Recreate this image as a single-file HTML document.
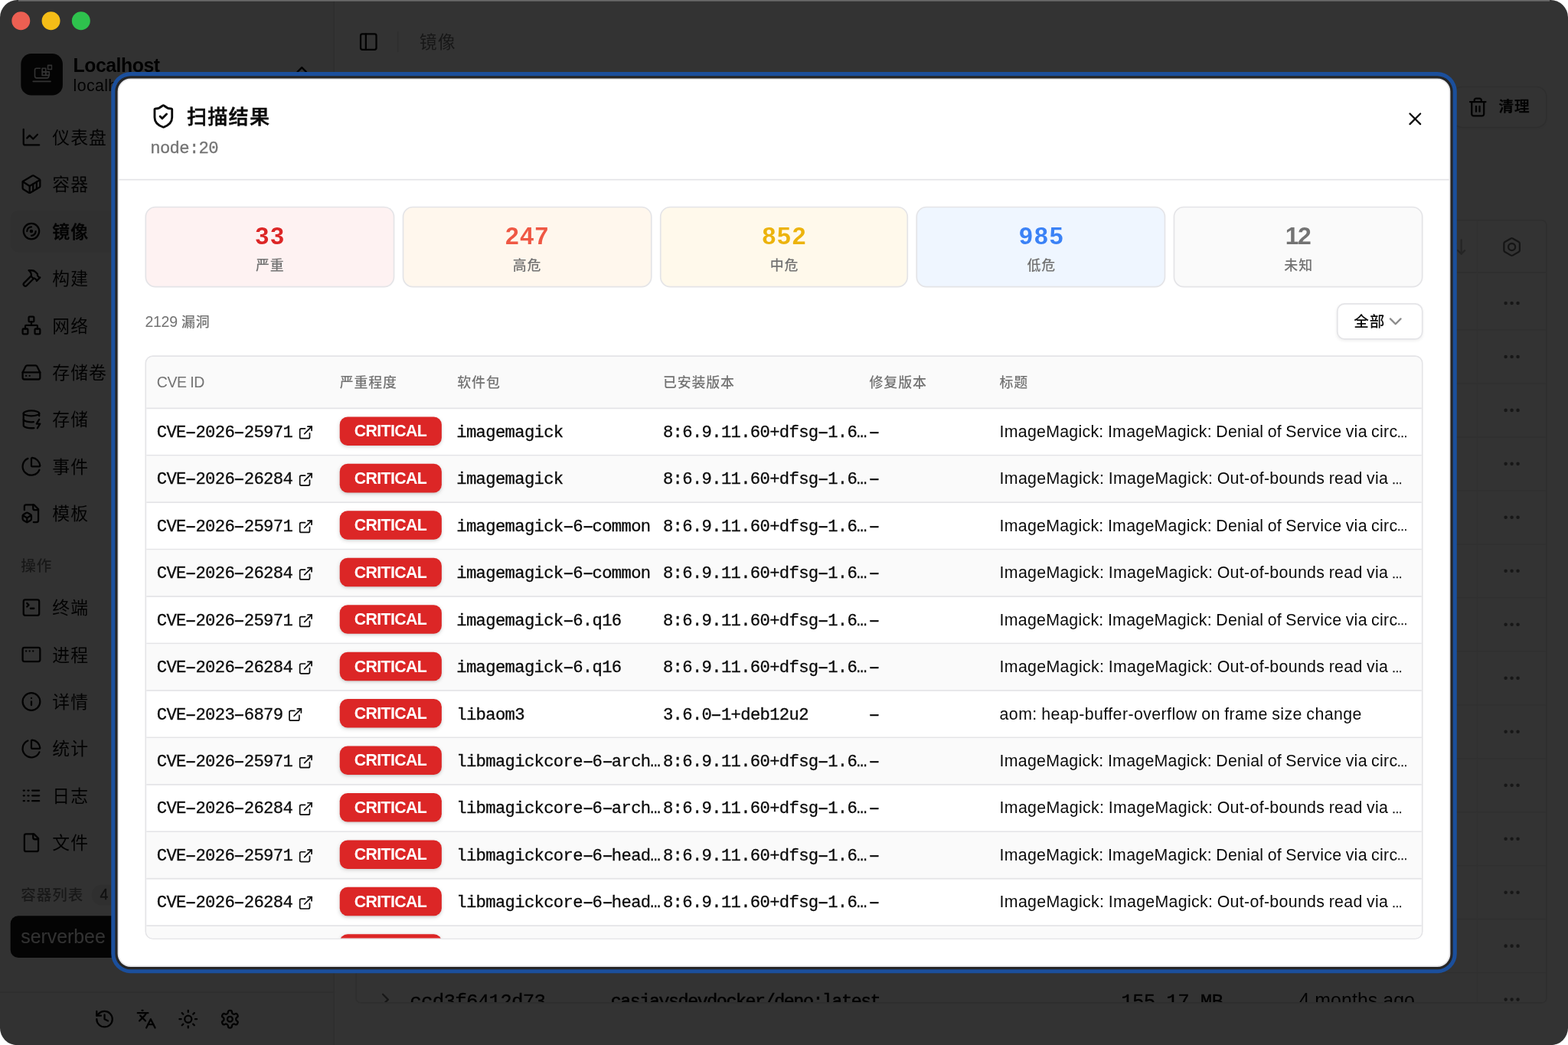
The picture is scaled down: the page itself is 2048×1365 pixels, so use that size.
<!DOCTYPE html>
<html lang="zh-CN">
<head>
<meta charset="utf-8">
<title>扫描结果 - node:20</title>
<style>
*{box-sizing:border-box;margin:0;padding:0}
html,body{width:2048px;height:1365px;overflow:hidden;background:#fff}
body{font-family:"Liberation Sans","Noto Sans CJK SC",sans-serif;font-size:14px;color:#0a0a0a}
svg{display:block;flex:none}
h2,p{font-size:inherit;font-weight:inherit}
.mono{font-family:"Liberation Mono","Noto Sans CJK SC",monospace;-webkit-text-stroke:0.18px currentColor}
.hy{display:inline-block;transform:scaleX(1.75)}
#win{will-change:transform;position:absolute;left:0;top:0;width:1200px;height:800px;transform:scale(1.7066667);transform-origin:0 0;border-radius:13.3px;overflow:hidden;background:#fff}
.abs{position:absolute}
.x{position:absolute;white-space:nowrap}
.sb{position:absolute;left:0;top:0;width:256px;height:800px;background:#fafafa;border-right:1px solid #e5e5e5}
.logo{position:absolute;left:16px;top:41px;width:32px;height:32px;border-radius:8px;background:#171717;display:flex;align-items:center;justify-content:center}
.ni{position:absolute;left:8px;width:240px;height:32px;line-height:32px;border-radius:6px;white-space:nowrap}
.ni svg{position:absolute;left:8px;top:8px}
.ni>span{position:absolute;left:32px;top:0}
.ni.on{background:#f0f0f0}
.gl{position:absolute;left:16px;height:32px;line-height:32px;color:#7a7a7a;white-space:nowrap}
.ft{position:absolute;left:0;top:759px;width:255px;height:41px;border-top:1px solid #e5e5e5}
.ft svg{position:absolute;top:12.3px}
.ov{position:absolute;left:0;top:0;right:0;bottom:0;background:rgba(0,0,0,.8)}
.tl{position:absolute;top:8.8px;width:14px;height:14px;border-radius:50%}
.dlg{position:absolute;left:90px;top:60px;width:1020px;height:680px;background:#fff;border:1px solid #e4e4e7;border-radius:10px;box-shadow:0 0 0 1.9px #262626,0 0 0 4.9px #1b4f9c}
.dh{position:absolute;left:0;top:0;right:0;height:77px;border-bottom:1px solid #e4e4e7}
.card{position:absolute;top:97px;height:62px;border:1px solid #e4e4e7;border-radius:8px;text-align:center}
.card .n{position:absolute;left:0;right:0;top:8px;height:28px;line-height:28px;white-space:nowrap}
.card .l{position:absolute;left:0;right:0;top:36px;height:16px;line-height:16px;color:#737373;white-space:nowrap}
.sel{position:absolute;left:932.1px;top:171.2px;width:66.2px;height:27.6px;border:1px solid #e4e4e7;border-radius:6px;box-shadow:0 1px 2px rgba(0,0,0,.05);background:#fff}
.tb{position:absolute;left:20px;top:211px;width:978px;height:447px;border:1px solid #e4e4e7;border-radius:6px;overflow:hidden;background:#fff}
.th{position:absolute;left:0;top:0;width:976px;height:40px;background:#fafafa;border-bottom:1px solid #e4e4e7;color:#737373}
.th span.h{position:absolute;top:0;height:39px;line-height:39px;white-space:nowrap}
.tr{position:absolute;left:0;width:976px;height:36px;border-bottom:1px solid #e4e4e7;white-space:nowrap}
.tr.alt{background:#fafafa}
.tr>div{position:absolute;top:0;height:35px;line-height:35px}
.tr svg{position:absolute;top:11.9px}
.tr>.bd{left:148px;top:6.25px;height:21.8px;width:78px;border-radius:6px;background:#dc2626;color:#fff;line-height:22px;text-align:center;box-shadow:0 1px 3px rgba(0,0,0,.12),0 1px 2px -1px rgba(0,0,0,.12)}
.c1{left:8px} .c3{left:237.4px} .c4{left:395.4px} .c5{left:553.4px} .c6{left:653px}
</style>
</head>
<body>
<div id="win">
<aside class="sb">
<div class="logo"><svg width="16" height="16" viewBox="0 0 24 24" fill="none" stroke="currentColor" stroke-width="1.4" stroke-linecap="round" stroke-linejoin="round" style="color:#ffffff;"><path d="M10 5H6a2 2 0 0 0-2 2v7a2 2 0 0 0 2 2h12a2 2 0 0 0 2-2v-1"/><path d="M2 20h20"/><rect x="12.500" y="5" width="4" height="4"/><rect x="12.500" y="9" width="4" height="4"/><rect x="16.500" y="9" width="4" height="4"/><rect x="19" y="1.500" width="4.500" height="4.500"/></svg></div>
<div class="x" style="left:56px;top:40px;height:18px;line-height:18px"><span style="display:inline-block;vertical-align:top;line-height:inherit;white-space:pre;font-size:14.56px;font-weight:700;letter-spacing:-0.281px;transform:translateY(0.95px);">Localhost</span></div>
<div class="x" style="left:56px;top:57px;height:16px;line-height:16px"><span style="display:inline-block;vertical-align:top;line-height:inherit;white-space:pre;font-size:12.48px;font-weight:400;letter-spacing:0.229px;transform:translateY(0.69px);">localhost</span></div>
<div class="abs" style="left:223px;top:49px"><svg width="16" height="16" viewBox="0 0 24 24" fill="none" stroke="currentColor" stroke-width="2" stroke-linecap="round" stroke-linejoin="round" style=""><path d="m7 15 5 5 5-5"/><path d="m7 9 5-5 5 5"/></svg></div>
<a class="ni" style="top:89px"><svg width="16" height="16" viewBox="0 0 24 24" fill="none" stroke="currentColor" stroke-width="2" stroke-linecap="round" stroke-linejoin="round" style=""><path d="M3 3v16a2 2 0 0 0 2 2h16"/><path d="m19 9-5 5-4-4-3 3"/></svg><span style="display:inline-block;vertical-align:top;line-height:inherit;white-space:pre;font-size:13.37px;font-weight:400;letter-spacing:0.63px;transform:translateY(1.01px);">仪表盘</span></a>
<a class="ni" style="top:125px"><svg width="16" height="16" viewBox="0 0 24 24" fill="none" stroke="currentColor" stroke-width="2" stroke-linecap="round" stroke-linejoin="round" style=""><path d="M22 7.700c0-.600-.400-1.200-.800-1.500l-6.300-3.900a1.720 1.720 0 0 0-1.700 0l-10.300 6c-.500.200-.900.800-.900 1.400v6.600c0 .500.400 1.200.800 1.500l6.300 3.900a1.720 1.720 0 0 0 1.700 0l10.300-6c.500-.300.900-1 .900-1.500Z"/><path d="M10 21.900V14L2.100 9.100"/><path d="m10 14 11.900-6.900"/><path d="M14 19.800v-8.100"/><path d="M18 17.500V9.400"/></svg><span style="display:inline-block;vertical-align:top;line-height:inherit;white-space:pre;font-size:13.37px;font-weight:400;letter-spacing:0.63px;transform:translateY(1.01px);">容器</span></a>
<a class="ni on" style="top:161px"><svg width="16" height="16" viewBox="0 0 24 24" fill="none" stroke="currentColor" stroke-width="2" stroke-linecap="round" stroke-linejoin="round" style=""><circle cx="12" cy="12" r="9"/><circle cx="12" cy="12" r="1"/><path d="M7 12a5 5 0 0 1 5-5"/><path d="M12 17a5 5 0 0 0 5-5"/></svg><span style="display:inline-block;vertical-align:top;line-height:inherit;white-space:pre;font-size:13.37px;font-weight:500;letter-spacing:0.63px;transform:translateY(1.01px);-webkit-text-stroke:0.25px #0a0a0a;">镜像</span></a>
<a class="ni" style="top:197px"><svg width="16" height="16" viewBox="0 0 24 24" fill="none" stroke="currentColor" stroke-width="2" stroke-linecap="round" stroke-linejoin="round" style=""><path d="m15 12-8.373 8.373a1 1 0 1 1-3-3L12 9"/><path d="m18 15 4-4"/><path d="m21.500 11.500-1.914-1.914A2 2 0 0 1 19 8.172V7l-2.260-2.260a6 6 0 0 0-4.202-1.756L9 2.960l.920.820A6.180 6.180 0 0 1 12 8.400V10l2 2h1.172a2 2 0 0 1 1.414.586L18.500 14.500"/></svg><span style="display:inline-block;vertical-align:top;line-height:inherit;white-space:pre;font-size:13.37px;font-weight:400;letter-spacing:0.63px;transform:translateY(1.01px);">构建</span></a>
<a class="ni" style="top:233px"><svg width="16" height="16" viewBox="0 0 24 24" fill="none" stroke="currentColor" stroke-width="2" stroke-linecap="round" stroke-linejoin="round" style=""><rect x="16" y="16" width="6" height="6" rx="1"/><rect x="2" y="16" width="6" height="6" rx="1"/><rect x="9" y="2" width="6" height="6" rx="1"/><path d="M5 16v-3a1 1 0 0 1 1-1h12a1 1 0 0 1 1 1v3"/><path d="M12 12V8"/></svg><span style="display:inline-block;vertical-align:top;line-height:inherit;white-space:pre;font-size:13.37px;font-weight:400;letter-spacing:0.63px;transform:translateY(1.01px);">网络</span></a>
<a class="ni" style="top:269px"><svg width="16" height="16" viewBox="0 0 24 24" fill="none" stroke="currentColor" stroke-width="2" stroke-linecap="round" stroke-linejoin="round" style=""><path d="M22 12H2"/><path d="M5.450 5.110 2 12v6a2 2 0 0 0 2 2h16a2 2 0 0 0 2-2v-6l-3.450-6.890A2 2 0 0 0 16.760 4H7.240a2 2 0 0 0-1.790 1.110z"/><path d="M6 16h.01"/><path d="M10 16h.01"/></svg><span style="display:inline-block;vertical-align:top;line-height:inherit;white-space:pre;font-size:13.37px;font-weight:400;letter-spacing:0.63px;transform:translateY(1.01px);">存储卷</span></a>
<a class="ni" style="top:305px"><svg width="16" height="16" viewBox="0 0 24 24" fill="none" stroke="currentColor" stroke-width="2" stroke-linecap="round" stroke-linejoin="round" style=""><ellipse cx="12" cy="5" rx="9" ry="3"/><path d="M3 5V19A9 3 0 0 0 15 21.840"/><path d="M21 5V8"/><path d="M21 12L18 17H22L19 22"/><path d="M3 12A9 3 0 0 0 14.590 14.870"/></svg><span style="display:inline-block;vertical-align:top;line-height:inherit;white-space:pre;font-size:13.37px;font-weight:400;letter-spacing:0.63px;transform:translateY(1.01px);">存储</span></a>
<a class="ni" style="top:341px"><svg width="16" height="16" viewBox="0 0 24 24" fill="none" stroke="currentColor" stroke-width="2" stroke-linecap="round" stroke-linejoin="round" style=""><path d="M21 12c.552 0 1.005-.449.950-.998a10 10 0 0 0-8.953-8.951c-.550-.055-.998.398-.998.950v8a1 1 0 0 0 1 1z"/><path d="M21.210 15.890A10 10 0 1 1 8 2.830"/></svg><span style="display:inline-block;vertical-align:top;line-height:inherit;white-space:pre;font-size:13.37px;font-weight:400;letter-spacing:0.63px;transform:translateY(1.01px);">事件</span></a>
<a class="ni" style="top:377px"><svg width="16" height="16" viewBox="0 0 24 24" fill="none" stroke="currentColor" stroke-width="2" stroke-linecap="round" stroke-linejoin="round" style=""><path d="M14.500 22H18a2 2 0 0 0 2-2V7l-5-5H6a2 2 0 0 0-2 2v4"/><path d="M14 2v4a2 2 0 0 0 2 2h4"/><path d="M3 13.100a2 2 0 0 0-1 1.760v3.240a2 2 0 0 0 .970 1.780L6 21.700a2 2 0 0 0 2.030.010L11 19.900a2 2 0 0 0 1-1.760V14.900a2 2 0 0 0-.970-1.780L8 11.300a2 2 0 0 0-2.030-.010Z"/><path d="M7 17v5"/><path d="M11.700 14.200 7 17l-4.700-2.800"/></svg><span style="display:inline-block;vertical-align:top;line-height:inherit;white-space:pre;font-size:13.37px;font-weight:400;letter-spacing:0.63px;transform:translateY(1.01px);">模板</span></a>
<div class="gl" style="top:416px"><span style="display:inline-block;vertical-align:top;line-height:inherit;white-space:pre;font-size:11.46px;font-weight:500;letter-spacing:0.54px;transform:translateY(1.17px);">操作</span></div>
<a class="ni" style="top:449px"><svg width="16" height="16" viewBox="0 0 24 24" fill="none" stroke="currentColor" stroke-width="2" stroke-linecap="round" stroke-linejoin="round" style=""><path d="m7 11 2-2-2-2"/><path d="M11 13h4"/><rect width="18" height="18" x="3" y="3" rx="2" ry="2"/></svg><span style="display:inline-block;vertical-align:top;line-height:inherit;white-space:pre;font-size:13.37px;font-weight:400;letter-spacing:0.63px;transform:translateY(1.01px);">终端</span></a>
<a class="ni" style="top:485px"><svg width="16" height="16" viewBox="0 0 24 24" fill="none" stroke="currentColor" stroke-width="2" stroke-linecap="round" stroke-linejoin="round" style=""><rect width="20" height="16" x="2" y="4" rx="2"/><path d="M6 8h.01"/><path d="M10 8h.01"/><path d="M14 8h.01"/></svg><span style="display:inline-block;vertical-align:top;line-height:inherit;white-space:pre;font-size:13.37px;font-weight:400;letter-spacing:0.63px;transform:translateY(1.01px);">进程</span></a>
<a class="ni" style="top:521px"><svg width="16" height="16" viewBox="0 0 24 24" fill="none" stroke="currentColor" stroke-width="2" stroke-linecap="round" stroke-linejoin="round" style=""><circle cx="12" cy="12" r="10"/><path d="M12 16v-4"/><path d="M12 8h.01"/></svg><span style="display:inline-block;vertical-align:top;line-height:inherit;white-space:pre;font-size:13.37px;font-weight:400;letter-spacing:0.63px;transform:translateY(1.01px);">详情</span></a>
<a class="ni" style="top:557px"><svg width="16" height="16" viewBox="0 0 24 24" fill="none" stroke="currentColor" stroke-width="2" stroke-linecap="round" stroke-linejoin="round" style=""><path d="M21 12c.552 0 1.005-.449.950-.998a10 10 0 0 0-8.953-8.951c-.550-.055-.998.398-.998.950v8a1 1 0 0 0 1 1z"/><path d="M21.210 15.890A10 10 0 1 1 8 2.830"/></svg><span style="display:inline-block;vertical-align:top;line-height:inherit;white-space:pre;font-size:13.37px;font-weight:400;letter-spacing:0.63px;transform:translateY(1.01px);">统计</span></a>
<a class="ni" style="top:593px"><svg width="16" height="16" viewBox="0 0 24 24" fill="none" stroke="currentColor" stroke-width="2" stroke-linecap="round" stroke-linejoin="round" style=""><path d="M13 12h8"/><path d="M13 18h8"/><path d="M13 6h8"/><path d="M3 12h1"/><path d="M3 18h1"/><path d="M3 6h1"/><path d="M8 12h1"/><path d="M8 18h1"/><path d="M8 6h1"/></svg><span style="display:inline-block;vertical-align:top;line-height:inherit;white-space:pre;font-size:13.37px;font-weight:400;letter-spacing:0.63px;transform:translateY(1.01px);">日志</span></a>
<a class="ni" style="top:629px"><svg width="16" height="16" viewBox="0 0 24 24" fill="none" stroke="currentColor" stroke-width="2" stroke-linecap="round" stroke-linejoin="round" style=""><path d="M15 2H6a2 2 0 0 0-2 2v16a2 2 0 0 0 2 2h12a2 2 0 0 0 2-2V7Z"/><path d="M14 2v4a2 2 0 0 0 2 2h4"/></svg><span style="display:inline-block;vertical-align:top;line-height:inherit;white-space:pre;font-size:13.37px;font-weight:400;letter-spacing:0.63px;transform:translateY(1.01px);">文件</span></a>
<div class="gl" style="top:669px"><span style="display:inline-block;vertical-align:top;line-height:inherit;white-space:pre;font-size:11.46px;font-weight:500;letter-spacing:0.54px;">容器列表</span></div>
<div class="x" style="left:69.7px;top:676.9px;width:20px;height:16px;line-height:16px;border-radius:8px;background:#ebebeb;text-align:center;color:#525252"><span style="display:inline-block;vertical-align:top;line-height:inherit;white-space:pre;font-size:11.44px;font-weight:400;letter-spacing:0.844px;transform:translateY(-0.47px);margin-right:-0.844px;-webkit-text-stroke:0.25px currentColor;">4</span></div>
<a class="ni" style="top:701px;background:#171717;color:#fafafa"><span style="left:8px"><span style="display:inline-block;vertical-align:top;line-height:inherit;white-space:pre;font-size:14.56px;font-weight:400;letter-spacing:0.001px;transform:translateY(-0.1px);">serverbee</span></span></a>
<div class="ft">
<svg width="16" height="16" viewBox="0 0 24 24" fill="none" stroke="currentColor" stroke-width="2" stroke-linecap="round" stroke-linejoin="round" style="left:71.8px"><path d="M3 12a9 9 0 1 0 9-9 9.750 9.750 0 0 0-6.740 2.740L3 8"/><path d="M3 3v5h5"/><path d="M12 7v5l4 2"/></svg>
<svg width="16" height="16" viewBox="0 0 24 24" fill="none" stroke="currentColor" stroke-width="2" stroke-linecap="round" stroke-linejoin="round" style="left:104px"><path d="m5 8 6 6"/><path d="m4 14 6-6 2-3"/><path d="M2 5h12"/><path d="M7 2h1"/><path d="m22 22-5-10-5 10"/><path d="M14 18h6"/></svg>
<svg width="16" height="16" viewBox="0 0 24 24" fill="none" stroke="currentColor" stroke-width="2" stroke-linecap="round" stroke-linejoin="round" style="left:136px"><circle cx="12" cy="12" r="4"/><path d="M12 2v2"/><path d="M12 20v2"/><path d="m4.930 4.930 1.410 1.410"/><path d="m17.660 17.660 1.410 1.410"/><path d="M2 12h2"/><path d="M20 12h2"/><path d="m6.340 17.660-1.410 1.410"/><path d="m19.070 4.930-1.410 1.410"/></svg>
<svg width="16" height="16" viewBox="0 0 24 24" fill="none" stroke="currentColor" stroke-width="2" stroke-linecap="round" stroke-linejoin="round" style="left:167.8px"><path d="M12.220 2h-.440a2 2 0 0 0-2 2v.180a2 2 0 0 1-1 1.730l-.430.250a2 2 0 0 1-2 0l-.150-.080a2 2 0 0 0-2.730.730l-.220.380a2 2 0 0 0 .730 2.730l.150.100a2 2 0 0 1 1 1.720v.510a2 2 0 0 1-1 1.740l-.150.090a2 2 0 0 0-.730 2.730l.220.380a2 2 0 0 0 2.730.730l.150-.080a2 2 0 0 1 2 0l.430.250a2 2 0 0 1 1 1.730V20a2 2 0 0 0 2 2h.440a2 2 0 0 0 2-2v-.180a2 2 0 0 1 1-1.730l.430-.250a2 2 0 0 1 2 0l.150.080a2 2 0 0 0 2.730-.730l.220-.390a2 2 0 0 0-.730-2.730l-.150-.080a2 2 0 0 1-1-1.740v-.500a2 2 0 0 1 1-1.740l.150-.090a2 2 0 0 0 .730-2.730l-.220-.380a2 2 0 0 0-2.730-.730l-.150.080a2 2 0 0 1-2 0l-.430-.250a2 2 0 0 1-1-1.730V4a2 2 0 0 0-2-2z"/><circle cx="12" cy="12" r="3"/></svg>
</div>
</aside>
<main class="abs" style="left:256px;top:0;width:944px;height:800px">
<div class="abs" style="left:18px;top:24px"><svg width="16" height="16" viewBox="0 0 24 24" fill="none" stroke="currentColor" stroke-width="2" stroke-linecap="round" stroke-linejoin="round" style=""><rect width="18" height="18" x="3" y="3" rx="2"/><path d="M9 3v18"/></svg></div>
<div class="abs" style="left:48px;top:24px;width:1px;height:16px;background:#e5e5e5"></div>
<div class="x" style="left:65px;top:22px;height:20px;line-height:20px;color:#737373"><span style="display:inline-block;vertical-align:top;line-height:inherit;white-space:pre;font-size:13.37px;font-weight:400;letter-spacing:0.63px;transform:translateY(1.1px);">镜像</span></div>
<div class="abs" style="left:855px;top:66px;width:73px;height:32px;border:1px solid #e5e5e5;border-radius:8px;box-shadow:0 1px 2px rgba(0,0,0,.05)"><span class="abs" style="left:11px;top:7px"><svg width="16" height="16" viewBox="0 0 24 24" fill="none" stroke="currentColor" stroke-width="2" stroke-linecap="round" stroke-linejoin="round" style=""><path d="M3 6h18"/><path d="M19 6v14c0 1-1 2-2 2H7c-1 0-2-1-2-2V6"/><path d="M8 6V4c0-1 1-2 2-2h4c1 0 2 1 2 2v2"/><path d="M10 11v6"/><path d="M14 11v6"/></svg></span><span class="x" style="left:35px;top:0;height:30px;line-height:30px"><span style="display:inline-block;vertical-align:top;line-height:inherit;white-space:pre;font-size:11.46px;font-weight:500;letter-spacing:0.54px;transform:translateY(-0.4px);-webkit-text-stroke:0.25px #0a0a0a;">清理</span></span></div>
<div class="abs" style="left:16px;top:167.9px;width:912px;height:600.4px;border:1px solid #e5e5e5;border-radius:4px;overflow:hidden">
<div class="abs" style="left:0;top:0;width:910px;height:39.8px;border-bottom:1px solid #e5e5e5"></div>
<div class="abs" style="left:857.4px;top:0;width:1px;height:600px;background:#f0f0f0"></div>
<div class="abs" style="left:833.9px;top:11.7px"><svg width="16" height="16" viewBox="0 0 24 24" fill="none" stroke="currentColor" stroke-width="2" stroke-linecap="round" stroke-linejoin="round" style="color:#b9b9b9;"><path d="m21 16-4 4-4-4"/><path d="M17 20V4"/><path d="m3 8 4-4 4 4"/><path d="M7 4v16"/></svg></div>
<div class="abs" style="left:876.3px;top:11.7px"><svg width="16" height="16" viewBox="0 0 24 24" fill="none" stroke="currentColor" stroke-width="2" stroke-linecap="round" stroke-linejoin="round" style="color:#6b6b6b;"><path d="M21 16V8a2 2 0 0 0-1-1.730l-7-4a2 2 0 0 0-2 0l-7 4A2 2 0 0 0 3 8v8a2 2 0 0 0 1 1.730l7 4a2 2 0 0 0 2 0l7-4A2 2 0 0 0 21 16z"/><circle cx="12" cy="12" r="4"/></svg></div>
<div class="abs" style="left:0;top:83.1px;width:910px;height:1px;background:#ededed"></div>
<div class="abs" style="left:876.3px;top:54.8px"><svg width="16" height="16" viewBox="0 0 24 24" fill="none" stroke="currentColor" stroke-width="2" stroke-linecap="round" stroke-linejoin="round" style="color:#737373;"><circle cx="12" cy="12" r="1"/><circle cx="19" cy="12" r="1"/><circle cx="5" cy="12" r="1"/></svg></div>
<div class="abs" style="left:0;top:124.1px;width:910px;height:1px;background:#ededed"></div>
<div class="abs" style="left:876.3px;top:95.8px"><svg width="16" height="16" viewBox="0 0 24 24" fill="none" stroke="currentColor" stroke-width="2" stroke-linecap="round" stroke-linejoin="round" style="color:#737373;"><circle cx="12" cy="12" r="1"/><circle cx="19" cy="12" r="1"/><circle cx="5" cy="12" r="1"/></svg></div>
<div class="abs" style="left:0;top:165.1px;width:910px;height:1px;background:#ededed"></div>
<div class="abs" style="left:876.3px;top:136.8px"><svg width="16" height="16" viewBox="0 0 24 24" fill="none" stroke="currentColor" stroke-width="2" stroke-linecap="round" stroke-linejoin="round" style="color:#737373;"><circle cx="12" cy="12" r="1"/><circle cx="19" cy="12" r="1"/><circle cx="5" cy="12" r="1"/></svg></div>
<div class="abs" style="left:0;top:206.1px;width:910px;height:1px;background:#ededed"></div>
<div class="abs" style="left:876.3px;top:177.8px"><svg width="16" height="16" viewBox="0 0 24 24" fill="none" stroke="currentColor" stroke-width="2" stroke-linecap="round" stroke-linejoin="round" style="color:#737373;"><circle cx="12" cy="12" r="1"/><circle cx="19" cy="12" r="1"/><circle cx="5" cy="12" r="1"/></svg></div>
<div class="abs" style="left:0;top:247.1px;width:910px;height:1px;background:#ededed"></div>
<div class="abs" style="left:876.3px;top:218.8px"><svg width="16" height="16" viewBox="0 0 24 24" fill="none" stroke="currentColor" stroke-width="2" stroke-linecap="round" stroke-linejoin="round" style="color:#737373;"><circle cx="12" cy="12" r="1"/><circle cx="19" cy="12" r="1"/><circle cx="5" cy="12" r="1"/></svg></div>
<div class="abs" style="left:0;top:288.1px;width:910px;height:1px;background:#ededed"></div>
<div class="abs" style="left:876.3px;top:259.8px"><svg width="16" height="16" viewBox="0 0 24 24" fill="none" stroke="currentColor" stroke-width="2" stroke-linecap="round" stroke-linejoin="round" style="color:#737373;"><circle cx="12" cy="12" r="1"/><circle cx="19" cy="12" r="1"/><circle cx="5" cy="12" r="1"/></svg></div>
<div class="abs" style="left:0;top:329.1px;width:910px;height:1px;background:#ededed"></div>
<div class="abs" style="left:876.3px;top:300.8px"><svg width="16" height="16" viewBox="0 0 24 24" fill="none" stroke="currentColor" stroke-width="2" stroke-linecap="round" stroke-linejoin="round" style="color:#737373;"><circle cx="12" cy="12" r="1"/><circle cx="19" cy="12" r="1"/><circle cx="5" cy="12" r="1"/></svg></div>
<div class="abs" style="left:0;top:370.1px;width:910px;height:1px;background:#ededed"></div>
<div class="abs" style="left:876.3px;top:341.8px"><svg width="16" height="16" viewBox="0 0 24 24" fill="none" stroke="currentColor" stroke-width="2" stroke-linecap="round" stroke-linejoin="round" style="color:#737373;"><circle cx="12" cy="12" r="1"/><circle cx="19" cy="12" r="1"/><circle cx="5" cy="12" r="1"/></svg></div>
<div class="abs" style="left:0;top:411.1px;width:910px;height:1px;background:#ededed"></div>
<div class="abs" style="left:876.3px;top:382.8px"><svg width="16" height="16" viewBox="0 0 24 24" fill="none" stroke="currentColor" stroke-width="2" stroke-linecap="round" stroke-linejoin="round" style="color:#737373;"><circle cx="12" cy="12" r="1"/><circle cx="19" cy="12" r="1"/><circle cx="5" cy="12" r="1"/></svg></div>
<div class="abs" style="left:0;top:452.1px;width:910px;height:1px;background:#ededed"></div>
<div class="abs" style="left:876.3px;top:423.8px"><svg width="16" height="16" viewBox="0 0 24 24" fill="none" stroke="currentColor" stroke-width="2" stroke-linecap="round" stroke-linejoin="round" style="color:#737373;"><circle cx="12" cy="12" r="1"/><circle cx="19" cy="12" r="1"/><circle cx="5" cy="12" r="1"/></svg></div>
<div class="abs" style="left:0;top:493.1px;width:910px;height:1px;background:#ededed"></div>
<div class="abs" style="left:876.3px;top:464.8px"><svg width="16" height="16" viewBox="0 0 24 24" fill="none" stroke="currentColor" stroke-width="2" stroke-linecap="round" stroke-linejoin="round" style="color:#737373;"><circle cx="12" cy="12" r="1"/><circle cx="19" cy="12" r="1"/><circle cx="5" cy="12" r="1"/></svg></div>
<div class="abs" style="left:0;top:534.1px;width:910px;height:1px;background:#ededed"></div>
<div class="abs" style="left:876.3px;top:505.8px"><svg width="16" height="16" viewBox="0 0 24 24" fill="none" stroke="currentColor" stroke-width="2" stroke-linecap="round" stroke-linejoin="round" style="color:#737373;"><circle cx="12" cy="12" r="1"/><circle cx="19" cy="12" r="1"/><circle cx="5" cy="12" r="1"/></svg></div>
<div class="abs" style="left:0;top:575.1px;width:910px;height:1px;background:#ededed"></div>
<div class="abs" style="left:876.3px;top:546.8px"><svg width="16" height="16" viewBox="0 0 24 24" fill="none" stroke="currentColor" stroke-width="2" stroke-linecap="round" stroke-linejoin="round" style="color:#737373;"><circle cx="12" cy="12" r="1"/><circle cx="19" cy="12" r="1"/><circle cx="5" cy="12" r="1"/></svg></div>
<div class="abs" style="left:0;top:616.1px;width:910px;height:1px;background:#ededed"></div>
<div class="abs" style="left:876.3px;top:587.8px"><svg width="16" height="16" viewBox="0 0 24 24" fill="none" stroke="currentColor" stroke-width="2" stroke-linecap="round" stroke-linejoin="round" style="color:#737373;"><circle cx="12" cy="12" r="1"/><circle cx="19" cy="12" r="1"/><circle cx="5" cy="12" r="1"/></svg></div>
<div class="abs" style="left:14.1px;top:587.8px"><svg width="16" height="16" viewBox="0 0 24 24" fill="none" stroke="currentColor" stroke-width="2" stroke-linecap="round" stroke-linejoin="round" style="color:#737373;"><path d="m9 18 6-6-6-6"/></svg></div>
<div class="x" style="left:40.6px;top:586px;height:20px;line-height:20px"><span class="mono" style="display:inline-block;vertical-align:top;line-height:inherit;white-space:pre;font-size:15.16px;letter-spacing:-0.445px;transform:translateY(2.34px);">ccd3f6412d73</span></div>
<div class="x" style="left:194.4px;top:586px;height:20px;line-height:20px"><span class="mono" style="display:inline-block;vertical-align:top;line-height:inherit;white-space:pre;font-size:13.65px;letter-spacing:-0.825px;transform:translateY(2.62px);-webkit-text-stroke:0.35px currentColor;">casjaysdevdocker/deno:latest</span></div>
<div class="x" style="left:585px;top:586px;height:20px;line-height:20px"><span class="mono" style="display:inline-block;vertical-align:top;line-height:inherit;white-space:pre;font-size:15.16px;letter-spacing:-0.445px;transform:translateY(2.34px);">155.17 MB</span></div>
<div class="x" style="left:721px;top:586px;height:20px;line-height:20px"><span style="display:inline-block;vertical-align:top;line-height:inherit;white-space:pre;font-size:14.56px;font-weight:400;letter-spacing:0.054px;transform:translateY(0.73px);">4 months ago</span></div>
</div>
</main>
<div class="ov"></div>
<div class="abs" style="left:14px;top:0;width:1172px;height:0.6px;background:#6a6a6a"></div>
<div class="tl" style="left:8.8px;background:#ec5f52"></div>
<div class="tl" style="left:32px;background:#f5bd17"></div>
<div class="tl" style="left:55.1px;background:#2ec24d"></div>
<section class="dlg">
<header class="dh">
<div class="abs" style="left:24px;top:18px"><svg width="20" height="20" viewBox="0 0 24 24" fill="none" stroke="currentColor" stroke-width="2" stroke-linecap="round" stroke-linejoin="round" style=""><path d="M20 13c0 5-3.5 7.5-7.660 8.950a1 1 0 0 1-.670-.010C7.500 20.500 4 18 4 13V6a1 1 0 0 1 1-1c2 0 4.500-1.200 6.240-2.720a1.170 1.170 0 0 1 1.520 0C14.510 3.810 17 5 19 5a1 1 0 0 1 1 1z"/><path d="m9 12 2 2 4-4"/></svg></div>
<h2 class="x" style="left:52px;top:16px;height:24px;line-height:24px"><span style="display:inline-block;vertical-align:top;line-height:inherit;white-space:pre;font-size:15.28px;font-weight:500;letter-spacing:0.72px;transform:translateY(0.88px);-webkit-text-stroke:0.3px #0a0a0a;">扫描结果</span></h2>
<p class="x" style="left:24px;top:44px;height:16px;line-height:16px;color:#737373"><span class="mono" style="display:inline-block;vertical-align:top;line-height:inherit;white-space:pre;font-size:13.0px;letter-spacing:-0.385px;transform:translateY(1.23px);">node:20</span></p>
<div class="abs" style="left:984px;top:21.8px"><svg width="16" height="16" viewBox="0 0 24 24" fill="none" stroke="currentColor" stroke-width="2" stroke-linecap="round" stroke-linejoin="round" style=""><path d="M18 6 6 18"/><path d="m6 6 12 12"/></svg></div>
</header>
<div class="card" style="left:20.00px;width:190.80px;background:#fef2f2"><div class="n" style="color:#dc2626"><span style="display:inline-block;vertical-align:top;line-height:inherit;white-space:pre;font-size:18.72px;font-weight:700;letter-spacing:1.219px;transform:translateY(-0.15px);margin-right:-1.219px;">33</span></div><div class="l"><span style="display:inline-block;vertical-align:top;line-height:inherit;white-space:pre;font-size:10.5px;font-weight:500;letter-spacing:0.5px;margin-right:-0.5px;">严重</span></div></div>
<div class="card" style="left:216.80px;width:190.80px;background:#fff7ed"><div class="n" style="color:#ef5844"><span style="display:inline-block;vertical-align:top;line-height:inherit;white-space:pre;font-size:18.72px;font-weight:700;letter-spacing:0.828px;transform:translateY(-0.15px);margin-right:-0.828px;">247</span></div><div class="l"><span style="display:inline-block;vertical-align:top;line-height:inherit;white-space:pre;font-size:10.5px;font-weight:500;letter-spacing:0.5px;margin-right:-0.5px;">高危</span></div></div>
<div class="card" style="left:413.60px;width:190.80px;background:#fff9eb"><div class="n" style="color:#ecb30d"><span style="display:inline-block;vertical-align:top;line-height:inherit;white-space:pre;font-size:18.72px;font-weight:700;letter-spacing:1.115px;transform:translateY(-0.15px);margin-right:-1.115px;">852</span></div><div class="l"><span style="display:inline-block;vertical-align:top;line-height:inherit;white-space:pre;font-size:10.5px;font-weight:500;letter-spacing:0.5px;margin-right:-0.5px;">中危</span></div></div>
<div class="card" style="left:610.40px;width:190.80px;background:#eff6ff"><div class="n" style="color:#3b82f6"><span style="display:inline-block;vertical-align:top;line-height:inherit;white-space:pre;font-size:18.72px;font-weight:700;letter-spacing:1.234px;transform:translateY(-0.15px);margin-right:-1.234px;">985</span></div><div class="l"><span style="display:inline-block;vertical-align:top;line-height:inherit;white-space:pre;font-size:10.5px;font-weight:500;letter-spacing:0.5px;margin-right:-0.5px;">低危</span></div></div>
<div class="card" style="left:807.20px;width:190.80px;background:#fafafa"><div class="n" style="color:#737373"><span style="display:inline-block;vertical-align:top;line-height:inherit;white-space:pre;font-size:18.72px;font-weight:700;letter-spacing:-0.852px;transform:translateY(-0.15px);margin-right:0.852px;">12</span></div><div class="l"><span style="display:inline-block;vertical-align:top;line-height:inherit;white-space:pre;font-size:10.5px;font-weight:500;letter-spacing:0.5px;margin-right:-0.5px;">未知</span></div></div>
<div class="x" style="left:20px;top:176px;height:16px;line-height:16px;color:#737373"><span style="display:inline-block;vertical-align:top;line-height:inherit;white-space:pre;font-size:11.44px;font-weight:400;letter-spacing:-0.163px;transform:translateY(1.03px);">2129 </span><span style="display:inline-block;vertical-align:top;line-height:inherit;white-space:pre;font-size:10.5px;font-weight:500;letter-spacing:0.5px;transform:translateY(1.15px);">漏洞</span></div>
<div class="sel"><span class="x" style="left:12px;top:0;height:26px;line-height:26px"><span style="display:inline-block;vertical-align:top;line-height:inherit;white-space:pre;font-size:11.46px;font-weight:500;letter-spacing:0.54px;">全部</span></span><span class="abs" style="left:35.8px;top:4.8px"><svg width="16" height="16" viewBox="0 0 24 24" fill="none" stroke="currentColor" stroke-width="2" stroke-linecap="round" stroke-linejoin="round" style="color:#8a8a8a;"><path d="m6 9 6 6 6-6"/></svg></span></div>
<div class="tb">
<div class="th">
<span class="h" style="left:8px"><span style="display:inline-block;vertical-align:top;line-height:inherit;white-space:pre;font-size:11.44px;font-weight:400;letter-spacing:-0.294px;transform:translateY(0.66px);">CVE ID</span></span>
<span class="h" style="left:148px"><span style="display:inline-block;vertical-align:top;line-height:inherit;white-space:pre;font-size:10.5px;font-weight:500;letter-spacing:0.5px;transform:translateY(0.73px);">严重程度</span></span>
<span class="h" style="left:238px"><span style="display:inline-block;vertical-align:top;line-height:inherit;white-space:pre;font-size:10.5px;font-weight:500;letter-spacing:0.5px;transform:translateY(0.73px);">软件包</span></span>
<span class="h" style="left:395.4px"><span style="display:inline-block;vertical-align:top;line-height:inherit;white-space:pre;font-size:10.5px;font-weight:500;letter-spacing:0.5px;transform:translateY(0.73px);">已安装版本</span></span>
<span class="h" style="left:553.4px"><span style="display:inline-block;vertical-align:top;line-height:inherit;white-space:pre;font-size:10.5px;font-weight:500;letter-spacing:0.5px;transform:translateY(0.73px);">修复版本</span></span>
<span class="h" style="left:653px"><span style="display:inline-block;vertical-align:top;line-height:inherit;white-space:pre;font-size:10.5px;font-weight:500;letter-spacing:0.5px;transform:translateY(0.73px);">标题</span></span>
</div>
<div class="tr" style="top:40px">
<div class="c1"><span class="mono" style="display:inline-block;vertical-align:top;line-height:inherit;white-space:pre;font-size:13.0px;letter-spacing:-0.385px;transform:translateY(0.54px);">CVE<span class="hy">-</span>2026<span class="hy">-</span>25971</span></div><svg width="12" height="12" viewBox="0 0 24 24" fill="none" stroke="currentColor" stroke-width="2" stroke-linecap="round" stroke-linejoin="round" style="color:#0a0a0a;left:115.8px"><path d="M15 3h6v6"/><path d="M10 14 21 3"/><path d="M18 13v6a2 2 0 0 1-2 2H5a2 2 0 0 1-2-2V8a2 2 0 0 1 2-2h6"/></svg>
<div class="bd"><span style="display:inline-block;vertical-align:top;line-height:inherit;white-space:pre;font-size:12.48px;font-weight:700;letter-spacing:-0.361px;transform:translateY(0.23px);margin-right:0.361px;">CRITICAL</span></div>
<div class="c3"><span class="mono" style="display:inline-block;vertical-align:top;line-height:inherit;white-space:pre;font-size:13.0px;letter-spacing:-0.385px;transform:translateY(0.54px);">imagemagick</span></div>
<div class="c4"><span class="mono" style="display:inline-block;vertical-align:top;line-height:inherit;white-space:pre;font-size:13.0px;letter-spacing:-0.385px;transform:translateY(0.54px);">8:6.9.11.60+dfsg<span class="hy">-</span>1.6…</span></div>
<div class="c5"><span class="mono" style="display:inline-block;vertical-align:top;line-height:inherit;white-space:pre;font-size:13.0px;letter-spacing:-0.385px;transform:translateY(0.54px);"><span class="hy">-</span></span></div>
<div class="c6"><span style="display:inline-block;vertical-align:top;line-height:inherit;white-space:pre;font-size:12.48px;font-weight:400;letter-spacing:0.171px;transform:translateY(0.54px);word-spacing:-0.5px;">ImageMagick: ImageMagick: Denial of Service via circ</span><span style="display:inline-block;vertical-align:top;line-height:inherit;white-space:pre;font-size:8px;-webkit-text-stroke:0.3px #0a0a0a;margin-left:-0.4px;transform:translateY(1.29px)">…</span></div>
</div>
<div class="tr alt" style="top:76px">
<div class="c1"><span class="mono" style="display:inline-block;vertical-align:top;line-height:inherit;white-space:pre;font-size:13.0px;letter-spacing:-0.385px;transform:translateY(0.54px);">CVE<span class="hy">-</span>2026<span class="hy">-</span>26284</span></div><svg width="12" height="12" viewBox="0 0 24 24" fill="none" stroke="currentColor" stroke-width="2" stroke-linecap="round" stroke-linejoin="round" style="color:#0a0a0a;left:115.8px"><path d="M15 3h6v6"/><path d="M10 14 21 3"/><path d="M18 13v6a2 2 0 0 1-2 2H5a2 2 0 0 1-2-2V8a2 2 0 0 1 2-2h6"/></svg>
<div class="bd"><span style="display:inline-block;vertical-align:top;line-height:inherit;white-space:pre;font-size:12.48px;font-weight:700;letter-spacing:-0.361px;transform:translateY(0.23px);margin-right:0.361px;">CRITICAL</span></div>
<div class="c3"><span class="mono" style="display:inline-block;vertical-align:top;line-height:inherit;white-space:pre;font-size:13.0px;letter-spacing:-0.385px;transform:translateY(0.54px);">imagemagick</span></div>
<div class="c4"><span class="mono" style="display:inline-block;vertical-align:top;line-height:inherit;white-space:pre;font-size:13.0px;letter-spacing:-0.385px;transform:translateY(0.54px);">8:6.9.11.60+dfsg<span class="hy">-</span>1.6…</span></div>
<div class="c5"><span class="mono" style="display:inline-block;vertical-align:top;line-height:inherit;white-space:pre;font-size:13.0px;letter-spacing:-0.385px;transform:translateY(0.54px);"><span class="hy">-</span></span></div>
<div class="c6"><span style="display:inline-block;vertical-align:top;line-height:inherit;white-space:pre;font-size:12.48px;font-weight:400;letter-spacing:0.204px;transform:translateY(0.54px);word-spacing:-0.5px;">ImageMagick: ImageMagick: Out-of-bounds read via </span><span style="display:inline-block;vertical-align:top;line-height:inherit;white-space:pre;font-size:8px;-webkit-text-stroke:0.3px #0a0a0a;margin-left:-0.4px;transform:translateY(1.29px)">…</span></div>
</div>
<div class="tr" style="top:112px">
<div class="c1"><span class="mono" style="display:inline-block;vertical-align:top;line-height:inherit;white-space:pre;font-size:13.0px;letter-spacing:-0.385px;transform:translateY(0.54px);">CVE<span class="hy">-</span>2026<span class="hy">-</span>25971</span></div><svg width="12" height="12" viewBox="0 0 24 24" fill="none" stroke="currentColor" stroke-width="2" stroke-linecap="round" stroke-linejoin="round" style="color:#0a0a0a;left:115.8px"><path d="M15 3h6v6"/><path d="M10 14 21 3"/><path d="M18 13v6a2 2 0 0 1-2 2H5a2 2 0 0 1-2-2V8a2 2 0 0 1 2-2h6"/></svg>
<div class="bd"><span style="display:inline-block;vertical-align:top;line-height:inherit;white-space:pre;font-size:12.48px;font-weight:700;letter-spacing:-0.361px;transform:translateY(0.23px);margin-right:0.361px;">CRITICAL</span></div>
<div class="c3"><span class="mono" style="display:inline-block;vertical-align:top;line-height:inherit;white-space:pre;font-size:13.0px;letter-spacing:-0.385px;transform:translateY(0.54px);">imagemagick<span class="hy">-</span>6<span class="hy">-</span>common</span></div>
<div class="c4"><span class="mono" style="display:inline-block;vertical-align:top;line-height:inherit;white-space:pre;font-size:13.0px;letter-spacing:-0.385px;transform:translateY(0.54px);">8:6.9.11.60+dfsg<span class="hy">-</span>1.6…</span></div>
<div class="c5"><span class="mono" style="display:inline-block;vertical-align:top;line-height:inherit;white-space:pre;font-size:13.0px;letter-spacing:-0.385px;transform:translateY(0.54px);"><span class="hy">-</span></span></div>
<div class="c6"><span style="display:inline-block;vertical-align:top;line-height:inherit;white-space:pre;font-size:12.48px;font-weight:400;letter-spacing:0.171px;transform:translateY(0.54px);word-spacing:-0.5px;">ImageMagick: ImageMagick: Denial of Service via circ</span><span style="display:inline-block;vertical-align:top;line-height:inherit;white-space:pre;font-size:8px;-webkit-text-stroke:0.3px #0a0a0a;margin-left:-0.4px;transform:translateY(1.29px)">…</span></div>
</div>
<div class="tr alt" style="top:148px">
<div class="c1"><span class="mono" style="display:inline-block;vertical-align:top;line-height:inherit;white-space:pre;font-size:13.0px;letter-spacing:-0.385px;transform:translateY(0.54px);">CVE<span class="hy">-</span>2026<span class="hy">-</span>26284</span></div><svg width="12" height="12" viewBox="0 0 24 24" fill="none" stroke="currentColor" stroke-width="2" stroke-linecap="round" stroke-linejoin="round" style="color:#0a0a0a;left:115.8px"><path d="M15 3h6v6"/><path d="M10 14 21 3"/><path d="M18 13v6a2 2 0 0 1-2 2H5a2 2 0 0 1-2-2V8a2 2 0 0 1 2-2h6"/></svg>
<div class="bd"><span style="display:inline-block;vertical-align:top;line-height:inherit;white-space:pre;font-size:12.48px;font-weight:700;letter-spacing:-0.361px;transform:translateY(0.23px);margin-right:0.361px;">CRITICAL</span></div>
<div class="c3"><span class="mono" style="display:inline-block;vertical-align:top;line-height:inherit;white-space:pre;font-size:13.0px;letter-spacing:-0.385px;transform:translateY(0.54px);">imagemagick<span class="hy">-</span>6<span class="hy">-</span>common</span></div>
<div class="c4"><span class="mono" style="display:inline-block;vertical-align:top;line-height:inherit;white-space:pre;font-size:13.0px;letter-spacing:-0.385px;transform:translateY(0.54px);">8:6.9.11.60+dfsg<span class="hy">-</span>1.6…</span></div>
<div class="c5"><span class="mono" style="display:inline-block;vertical-align:top;line-height:inherit;white-space:pre;font-size:13.0px;letter-spacing:-0.385px;transform:translateY(0.54px);"><span class="hy">-</span></span></div>
<div class="c6"><span style="display:inline-block;vertical-align:top;line-height:inherit;white-space:pre;font-size:12.48px;font-weight:400;letter-spacing:0.204px;transform:translateY(0.54px);word-spacing:-0.5px;">ImageMagick: ImageMagick: Out-of-bounds read via </span><span style="display:inline-block;vertical-align:top;line-height:inherit;white-space:pre;font-size:8px;-webkit-text-stroke:0.3px #0a0a0a;margin-left:-0.4px;transform:translateY(1.29px)">…</span></div>
</div>
<div class="tr" style="top:184px">
<div class="c1"><span class="mono" style="display:inline-block;vertical-align:top;line-height:inherit;white-space:pre;font-size:13.0px;letter-spacing:-0.385px;transform:translateY(0.54px);">CVE<span class="hy">-</span>2026<span class="hy">-</span>25971</span></div><svg width="12" height="12" viewBox="0 0 24 24" fill="none" stroke="currentColor" stroke-width="2" stroke-linecap="round" stroke-linejoin="round" style="color:#0a0a0a;left:115.8px"><path d="M15 3h6v6"/><path d="M10 14 21 3"/><path d="M18 13v6a2 2 0 0 1-2 2H5a2 2 0 0 1-2-2V8a2 2 0 0 1 2-2h6"/></svg>
<div class="bd"><span style="display:inline-block;vertical-align:top;line-height:inherit;white-space:pre;font-size:12.48px;font-weight:700;letter-spacing:-0.361px;transform:translateY(0.23px);margin-right:0.361px;">CRITICAL</span></div>
<div class="c3"><span class="mono" style="display:inline-block;vertical-align:top;line-height:inherit;white-space:pre;font-size:13.0px;letter-spacing:-0.385px;transform:translateY(0.54px);">imagemagick<span class="hy">-</span>6.q16</span></div>
<div class="c4"><span class="mono" style="display:inline-block;vertical-align:top;line-height:inherit;white-space:pre;font-size:13.0px;letter-spacing:-0.385px;transform:translateY(0.54px);">8:6.9.11.60+dfsg<span class="hy">-</span>1.6…</span></div>
<div class="c5"><span class="mono" style="display:inline-block;vertical-align:top;line-height:inherit;white-space:pre;font-size:13.0px;letter-spacing:-0.385px;transform:translateY(0.54px);"><span class="hy">-</span></span></div>
<div class="c6"><span style="display:inline-block;vertical-align:top;line-height:inherit;white-space:pre;font-size:12.48px;font-weight:400;letter-spacing:0.171px;transform:translateY(0.54px);word-spacing:-0.5px;">ImageMagick: ImageMagick: Denial of Service via circ</span><span style="display:inline-block;vertical-align:top;line-height:inherit;white-space:pre;font-size:8px;-webkit-text-stroke:0.3px #0a0a0a;margin-left:-0.4px;transform:translateY(1.29px)">…</span></div>
</div>
<div class="tr alt" style="top:220px">
<div class="c1"><span class="mono" style="display:inline-block;vertical-align:top;line-height:inherit;white-space:pre;font-size:13.0px;letter-spacing:-0.385px;transform:translateY(0.54px);">CVE<span class="hy">-</span>2026<span class="hy">-</span>26284</span></div><svg width="12" height="12" viewBox="0 0 24 24" fill="none" stroke="currentColor" stroke-width="2" stroke-linecap="round" stroke-linejoin="round" style="color:#0a0a0a;left:115.8px"><path d="M15 3h6v6"/><path d="M10 14 21 3"/><path d="M18 13v6a2 2 0 0 1-2 2H5a2 2 0 0 1-2-2V8a2 2 0 0 1 2-2h6"/></svg>
<div class="bd"><span style="display:inline-block;vertical-align:top;line-height:inherit;white-space:pre;font-size:12.48px;font-weight:700;letter-spacing:-0.361px;transform:translateY(0.23px);margin-right:0.361px;">CRITICAL</span></div>
<div class="c3"><span class="mono" style="display:inline-block;vertical-align:top;line-height:inherit;white-space:pre;font-size:13.0px;letter-spacing:-0.385px;transform:translateY(0.54px);">imagemagick<span class="hy">-</span>6.q16</span></div>
<div class="c4"><span class="mono" style="display:inline-block;vertical-align:top;line-height:inherit;white-space:pre;font-size:13.0px;letter-spacing:-0.385px;transform:translateY(0.54px);">8:6.9.11.60+dfsg<span class="hy">-</span>1.6…</span></div>
<div class="c5"><span class="mono" style="display:inline-block;vertical-align:top;line-height:inherit;white-space:pre;font-size:13.0px;letter-spacing:-0.385px;transform:translateY(0.54px);"><span class="hy">-</span></span></div>
<div class="c6"><span style="display:inline-block;vertical-align:top;line-height:inherit;white-space:pre;font-size:12.48px;font-weight:400;letter-spacing:0.204px;transform:translateY(0.54px);word-spacing:-0.5px;">ImageMagick: ImageMagick: Out-of-bounds read via </span><span style="display:inline-block;vertical-align:top;line-height:inherit;white-space:pre;font-size:8px;-webkit-text-stroke:0.3px #0a0a0a;margin-left:-0.4px;transform:translateY(1.29px)">…</span></div>
</div>
<div class="tr" style="top:256px">
<div class="c1"><span class="mono" style="display:inline-block;vertical-align:top;line-height:inherit;white-space:pre;font-size:13.0px;letter-spacing:-0.385px;transform:translateY(0.54px);">CVE<span class="hy">-</span>2023<span class="hy">-</span>6879</span></div><svg width="12" height="12" viewBox="0 0 24 24" fill="none" stroke="currentColor" stroke-width="2" stroke-linecap="round" stroke-linejoin="round" style="color:#0a0a0a;left:108.4px"><path d="M15 3h6v6"/><path d="M10 14 21 3"/><path d="M18 13v6a2 2 0 0 1-2 2H5a2 2 0 0 1-2-2V8a2 2 0 0 1 2-2h6"/></svg>
<div class="bd"><span style="display:inline-block;vertical-align:top;line-height:inherit;white-space:pre;font-size:12.48px;font-weight:700;letter-spacing:-0.361px;transform:translateY(0.23px);margin-right:0.361px;">CRITICAL</span></div>
<div class="c3"><span class="mono" style="display:inline-block;vertical-align:top;line-height:inherit;white-space:pre;font-size:13.0px;letter-spacing:-0.385px;transform:translateY(0.54px);">libaom3</span></div>
<div class="c4"><span class="mono" style="display:inline-block;vertical-align:top;line-height:inherit;white-space:pre;font-size:13.0px;letter-spacing:-0.385px;transform:translateY(0.54px);">3.6.0<span class="hy">-</span>1+deb12u2</span></div>
<div class="c5"><span class="mono" style="display:inline-block;vertical-align:top;line-height:inherit;white-space:pre;font-size:13.0px;letter-spacing:-0.385px;transform:translateY(0.54px);"><span class="hy">-</span></span></div>
<div class="c6"><span style="display:inline-block;vertical-align:top;line-height:inherit;white-space:pre;font-size:12.48px;font-weight:400;letter-spacing:0.256px;transform:translateY(0.54px);word-spacing:-0.5px;">aom: heap-buffer-overflow on frame size change</span></div>
</div>
<div class="tr alt" style="top:292px">
<div class="c1"><span class="mono" style="display:inline-block;vertical-align:top;line-height:inherit;white-space:pre;font-size:13.0px;letter-spacing:-0.385px;transform:translateY(0.54px);">CVE<span class="hy">-</span>2026<span class="hy">-</span>25971</span></div><svg width="12" height="12" viewBox="0 0 24 24" fill="none" stroke="currentColor" stroke-width="2" stroke-linecap="round" stroke-linejoin="round" style="color:#0a0a0a;left:115.8px"><path d="M15 3h6v6"/><path d="M10 14 21 3"/><path d="M18 13v6a2 2 0 0 1-2 2H5a2 2 0 0 1-2-2V8a2 2 0 0 1 2-2h6"/></svg>
<div class="bd"><span style="display:inline-block;vertical-align:top;line-height:inherit;white-space:pre;font-size:12.48px;font-weight:700;letter-spacing:-0.361px;transform:translateY(0.23px);margin-right:0.361px;">CRITICAL</span></div>
<div class="c3"><span class="mono" style="display:inline-block;vertical-align:top;line-height:inherit;white-space:pre;font-size:13.0px;letter-spacing:-0.385px;transform:translateY(0.54px);">libmagickcore<span class="hy">-</span>6<span class="hy">-</span>arch…</span></div>
<div class="c4"><span class="mono" style="display:inline-block;vertical-align:top;line-height:inherit;white-space:pre;font-size:13.0px;letter-spacing:-0.385px;transform:translateY(0.54px);">8:6.9.11.60+dfsg<span class="hy">-</span>1.6…</span></div>
<div class="c5"><span class="mono" style="display:inline-block;vertical-align:top;line-height:inherit;white-space:pre;font-size:13.0px;letter-spacing:-0.385px;transform:translateY(0.54px);"><span class="hy">-</span></span></div>
<div class="c6"><span style="display:inline-block;vertical-align:top;line-height:inherit;white-space:pre;font-size:12.48px;font-weight:400;letter-spacing:0.171px;transform:translateY(0.54px);word-spacing:-0.5px;">ImageMagick: ImageMagick: Denial of Service via circ</span><span style="display:inline-block;vertical-align:top;line-height:inherit;white-space:pre;font-size:8px;-webkit-text-stroke:0.3px #0a0a0a;margin-left:-0.4px;transform:translateY(1.29px)">…</span></div>
</div>
<div class="tr" style="top:328px">
<div class="c1"><span class="mono" style="display:inline-block;vertical-align:top;line-height:inherit;white-space:pre;font-size:13.0px;letter-spacing:-0.385px;transform:translateY(0.54px);">CVE<span class="hy">-</span>2026<span class="hy">-</span>26284</span></div><svg width="12" height="12" viewBox="0 0 24 24" fill="none" stroke="currentColor" stroke-width="2" stroke-linecap="round" stroke-linejoin="round" style="color:#0a0a0a;left:115.8px"><path d="M15 3h6v6"/><path d="M10 14 21 3"/><path d="M18 13v6a2 2 0 0 1-2 2H5a2 2 0 0 1-2-2V8a2 2 0 0 1 2-2h6"/></svg>
<div class="bd"><span style="display:inline-block;vertical-align:top;line-height:inherit;white-space:pre;font-size:12.48px;font-weight:700;letter-spacing:-0.361px;transform:translateY(0.23px);margin-right:0.361px;">CRITICAL</span></div>
<div class="c3"><span class="mono" style="display:inline-block;vertical-align:top;line-height:inherit;white-space:pre;font-size:13.0px;letter-spacing:-0.385px;transform:translateY(0.54px);">libmagickcore<span class="hy">-</span>6<span class="hy">-</span>arch…</span></div>
<div class="c4"><span class="mono" style="display:inline-block;vertical-align:top;line-height:inherit;white-space:pre;font-size:13.0px;letter-spacing:-0.385px;transform:translateY(0.54px);">8:6.9.11.60+dfsg<span class="hy">-</span>1.6…</span></div>
<div class="c5"><span class="mono" style="display:inline-block;vertical-align:top;line-height:inherit;white-space:pre;font-size:13.0px;letter-spacing:-0.385px;transform:translateY(0.54px);"><span class="hy">-</span></span></div>
<div class="c6"><span style="display:inline-block;vertical-align:top;line-height:inherit;white-space:pre;font-size:12.48px;font-weight:400;letter-spacing:0.204px;transform:translateY(0.54px);word-spacing:-0.5px;">ImageMagick: ImageMagick: Out-of-bounds read via </span><span style="display:inline-block;vertical-align:top;line-height:inherit;white-space:pre;font-size:8px;-webkit-text-stroke:0.3px #0a0a0a;margin-left:-0.4px;transform:translateY(1.29px)">…</span></div>
</div>
<div class="tr alt" style="top:364px">
<div class="c1"><span class="mono" style="display:inline-block;vertical-align:top;line-height:inherit;white-space:pre;font-size:13.0px;letter-spacing:-0.385px;transform:translateY(0.54px);">CVE<span class="hy">-</span>2026<span class="hy">-</span>25971</span></div><svg width="12" height="12" viewBox="0 0 24 24" fill="none" stroke="currentColor" stroke-width="2" stroke-linecap="round" stroke-linejoin="round" style="color:#0a0a0a;left:115.8px"><path d="M15 3h6v6"/><path d="M10 14 21 3"/><path d="M18 13v6a2 2 0 0 1-2 2H5a2 2 0 0 1-2-2V8a2 2 0 0 1 2-2h6"/></svg>
<div class="bd"><span style="display:inline-block;vertical-align:top;line-height:inherit;white-space:pre;font-size:12.48px;font-weight:700;letter-spacing:-0.361px;transform:translateY(0.23px);margin-right:0.361px;">CRITICAL</span></div>
<div class="c3"><span class="mono" style="display:inline-block;vertical-align:top;line-height:inherit;white-space:pre;font-size:13.0px;letter-spacing:-0.385px;transform:translateY(0.54px);">libmagickcore<span class="hy">-</span>6<span class="hy">-</span>head…</span></div>
<div class="c4"><span class="mono" style="display:inline-block;vertical-align:top;line-height:inherit;white-space:pre;font-size:13.0px;letter-spacing:-0.385px;transform:translateY(0.54px);">8:6.9.11.60+dfsg<span class="hy">-</span>1.6…</span></div>
<div class="c5"><span class="mono" style="display:inline-block;vertical-align:top;line-height:inherit;white-space:pre;font-size:13.0px;letter-spacing:-0.385px;transform:translateY(0.54px);"><span class="hy">-</span></span></div>
<div class="c6"><span style="display:inline-block;vertical-align:top;line-height:inherit;white-space:pre;font-size:12.48px;font-weight:400;letter-spacing:0.171px;transform:translateY(0.54px);word-spacing:-0.5px;">ImageMagick: ImageMagick: Denial of Service via circ</span><span style="display:inline-block;vertical-align:top;line-height:inherit;white-space:pre;font-size:8px;-webkit-text-stroke:0.3px #0a0a0a;margin-left:-0.4px;transform:translateY(1.29px)">…</span></div>
</div>
<div class="tr" style="top:400px">
<div class="c1"><span class="mono" style="display:inline-block;vertical-align:top;line-height:inherit;white-space:pre;font-size:13.0px;letter-spacing:-0.385px;transform:translateY(0.54px);">CVE<span class="hy">-</span>2026<span class="hy">-</span>26284</span></div><svg width="12" height="12" viewBox="0 0 24 24" fill="none" stroke="currentColor" stroke-width="2" stroke-linecap="round" stroke-linejoin="round" style="color:#0a0a0a;left:115.8px"><path d="M15 3h6v6"/><path d="M10 14 21 3"/><path d="M18 13v6a2 2 0 0 1-2 2H5a2 2 0 0 1-2-2V8a2 2 0 0 1 2-2h6"/></svg>
<div class="bd"><span style="display:inline-block;vertical-align:top;line-height:inherit;white-space:pre;font-size:12.48px;font-weight:700;letter-spacing:-0.361px;transform:translateY(0.23px);margin-right:0.361px;">CRITICAL</span></div>
<div class="c3"><span class="mono" style="display:inline-block;vertical-align:top;line-height:inherit;white-space:pre;font-size:13.0px;letter-spacing:-0.385px;transform:translateY(0.54px);">libmagickcore<span class="hy">-</span>6<span class="hy">-</span>head…</span></div>
<div class="c4"><span class="mono" style="display:inline-block;vertical-align:top;line-height:inherit;white-space:pre;font-size:13.0px;letter-spacing:-0.385px;transform:translateY(0.54px);">8:6.9.11.60+dfsg<span class="hy">-</span>1.6…</span></div>
<div class="c5"><span class="mono" style="display:inline-block;vertical-align:top;line-height:inherit;white-space:pre;font-size:13.0px;letter-spacing:-0.385px;transform:translateY(0.54px);"><span class="hy">-</span></span></div>
<div class="c6"><span style="display:inline-block;vertical-align:top;line-height:inherit;white-space:pre;font-size:12.48px;font-weight:400;letter-spacing:0.204px;transform:translateY(0.54px);word-spacing:-0.5px;">ImageMagick: ImageMagick: Out-of-bounds read via </span><span style="display:inline-block;vertical-align:top;line-height:inherit;white-space:pre;font-size:8px;-webkit-text-stroke:0.3px #0a0a0a;margin-left:-0.4px;transform:translateY(1.29px)">…</span></div>
</div>
<div class="tr alt" style="top:436px"><div class="bd"><span style="display:inline-block;vertical-align:top;line-height:inherit;white-space:pre;font-size:12.48px;font-weight:700;letter-spacing:-0.361px;transform:translateY(0.23px);margin-right:0.361px;">CRITICAL</span></div></div>
</div>
</section>
</div>
</body>
</html>
